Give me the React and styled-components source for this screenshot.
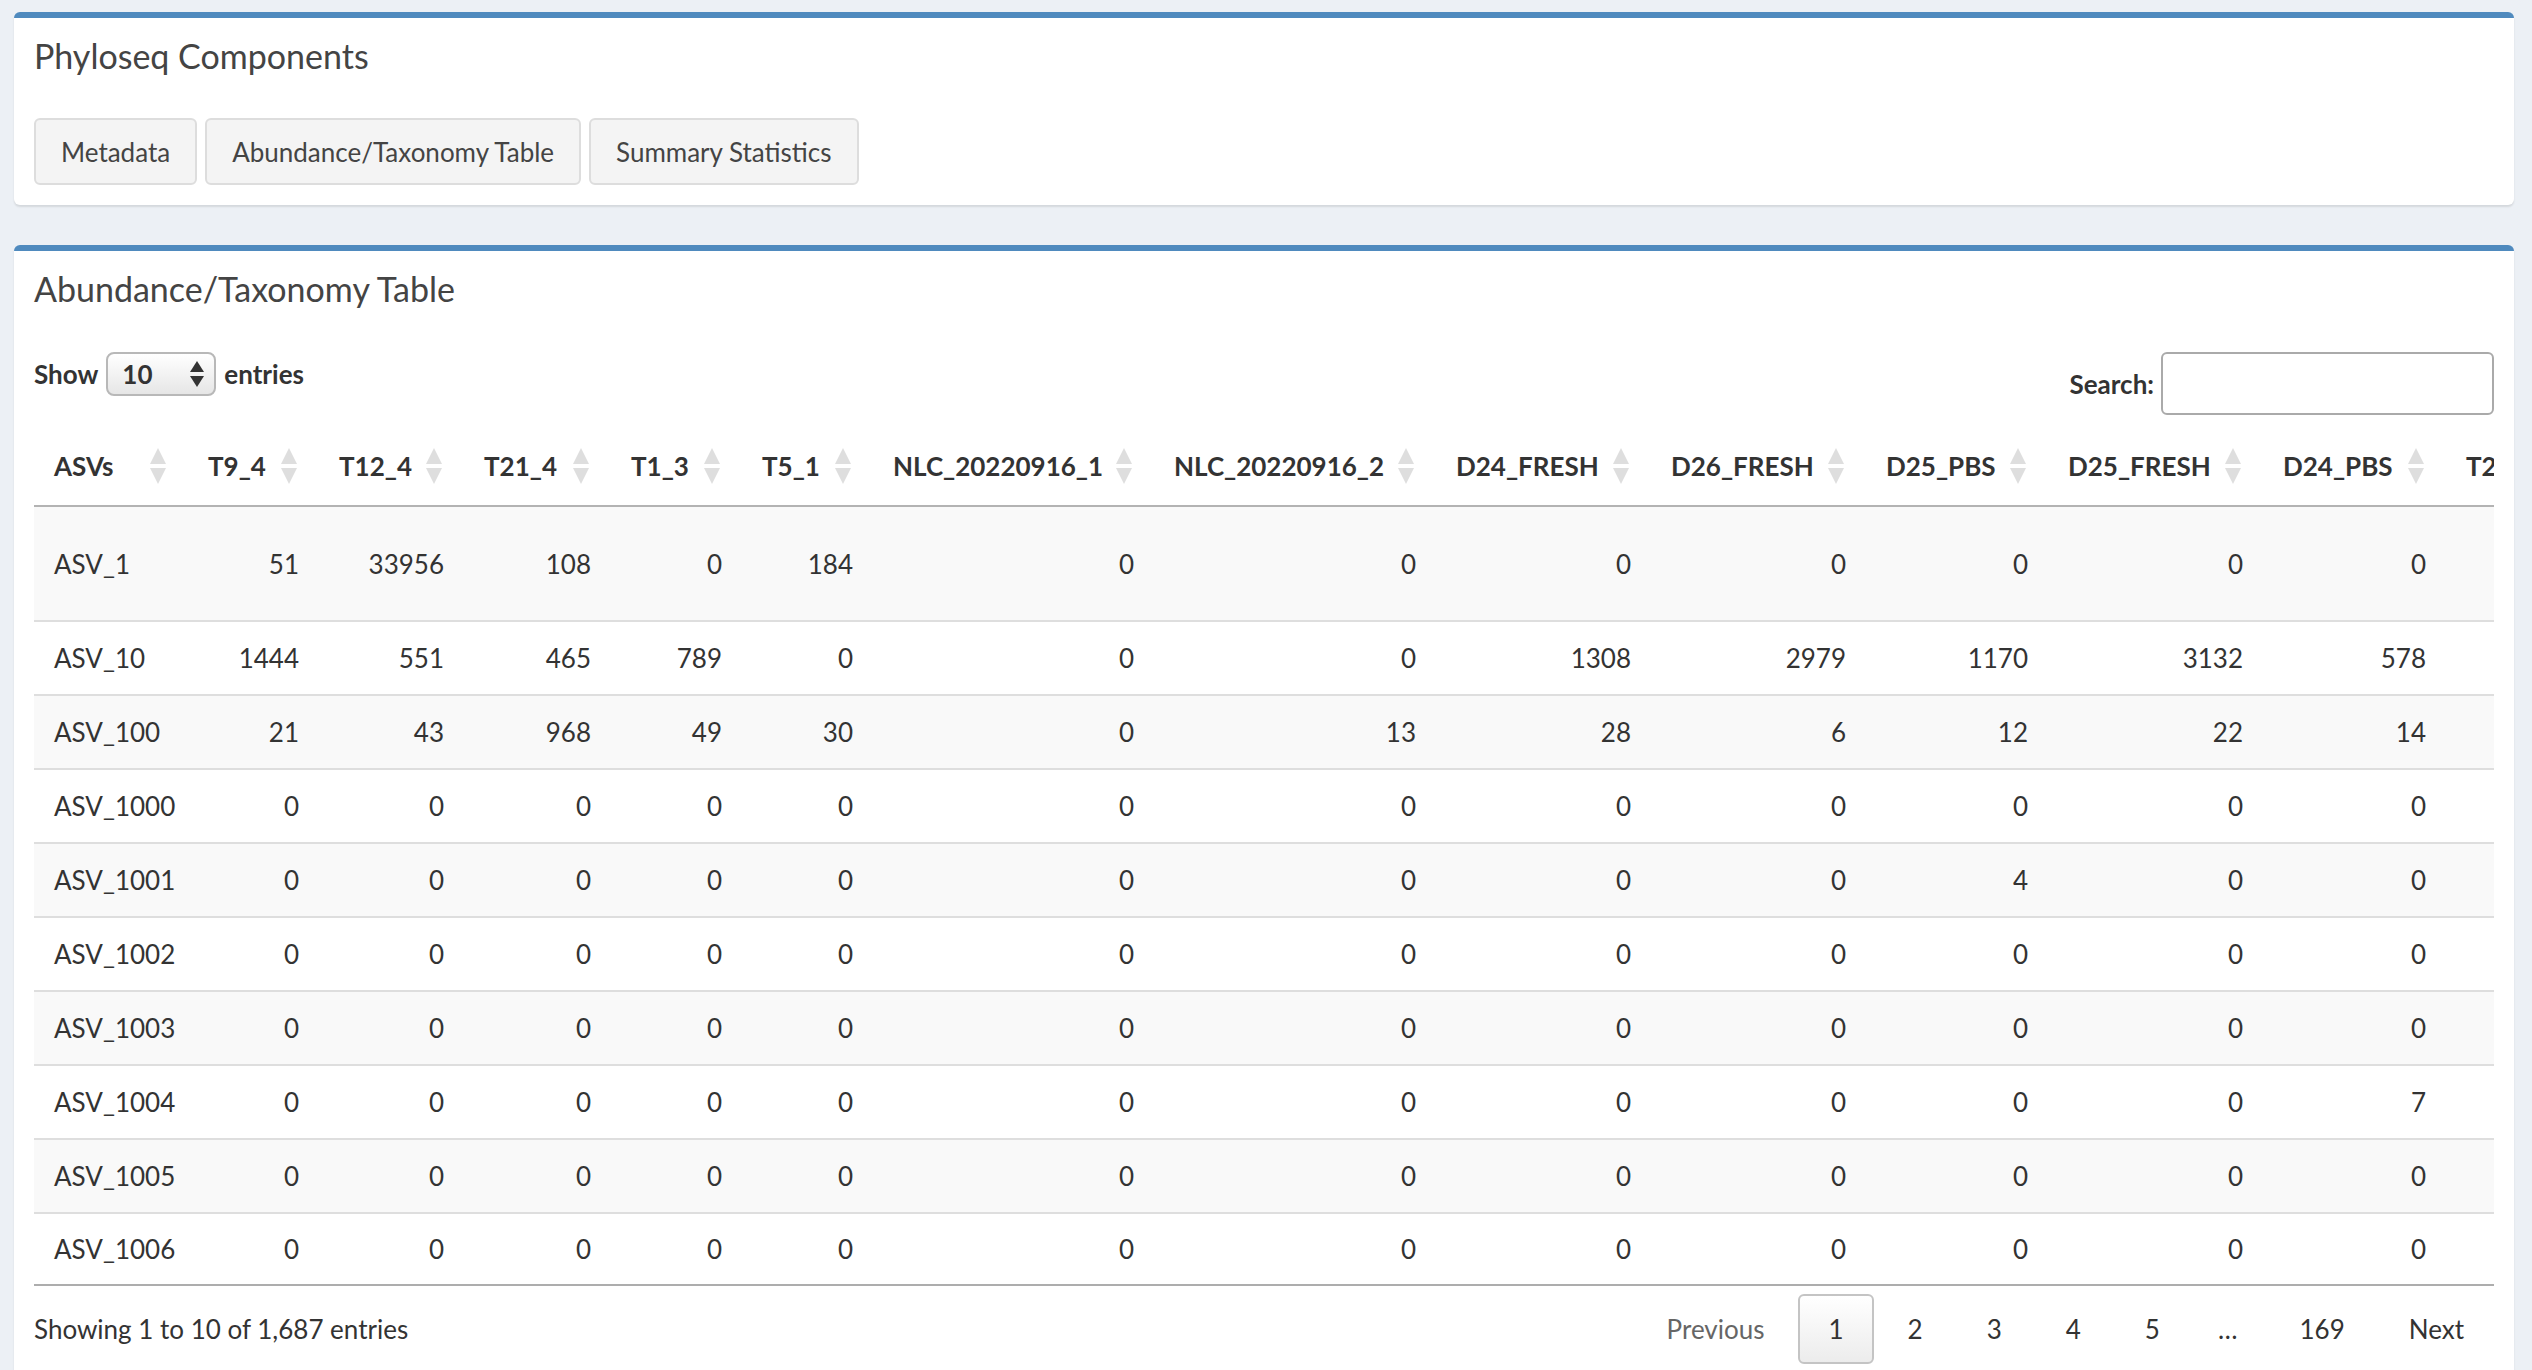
import React from "react";
import styled, { createGlobalStyle } from "styled-components";

const GlobalStyle = createGlobalStyle`
  html, body { margin: 0; padding: 0; }
  body {
    background: #ecf0f5;
    font-family: Lato, "Open Sans", "Liberation Sans", sans-serif;
    color: #333;
  }
  * { box-sizing: border-box; }
`;

const Page = styled.div`
  padding: 12px 18px 0 14px;
  display: flex;
  flex-direction: column;
  gap: 40px;
`;

const Box = styled.section`
  background: #fff;
  border-top: 6px solid #4f8abe;
  border-radius: 6px;
  box-shadow: 0 2px 2px rgba(0, 0, 0, 0.1);
`;

const BoxHeader = styled.div`
  padding: 20px;
`;

const BoxTitle = styled.h3`
  margin: 0;
  font-size: 34px;
  line-height: 36px;
  font-weight: 400;
  color: #444;
`;

const ButtonBar = styled.div`
  display: flex;
  gap: 8px;
  padding: 24px 20px 20px;
`;

const TabButton = styled.button`
  height: 67px;
  padding: 0 25px;
  background: #f4f4f4;
  border: 2px solid #ddd;
  border-radius: 6px;
  font-family: inherit;
  font-size: 26px;
  color: #444;
`;

const TableBody = styled.div`
  padding: 25px 20px 20px;
`;

const Controls = styled.div`
  display: flex;
  justify-content: space-between;
  align-items: flex-start;
  margin-bottom: 12px;
`;

const LengthLabel = styled.label`
  display: flex;
  align-items: center;
  gap: 8px;
  height: 44px;
  font-weight: 700;
  font-size: 26px;
  color: #333;
`;

const SelectWrap = styled.span`
  position: relative;
  display: inline-block;
  width: 110px;
  height: 44px;
`;

const Select = styled.select`
  appearance: none;
  -webkit-appearance: none;
  width: 100%;
  height: 100%;
  border: 2px solid #b8b8b8;
  border-radius: 8px;
  background: linear-gradient(#ffffff, #e6e6e6);
  font-family: inherit;
  font-weight: 700;
  font-size: 26px;
  color: #333;
  padding-left: 14px;
`;

const SelectArrows = styled.svg`
  position: absolute;
  right: 12px;
  top: 50%;
  transform: translateY(-50%);
  pointer-events: none;
`;

const SearchLabel = styled.label`
  display: flex;
  align-items: center;
  gap: 7px;
  font-weight: 700;
  font-size: 26px;
  color: #333;
`;

const SearchInput = styled.input`
  width: 333px;
  height: 63px;
  border: 2px solid #aaa;
  border-radius: 6px;
  font-family: inherit;
  font-size: 26px;
  padding: 0 10px;
`;

const TableScroll = styled.div`
  overflow: hidden;
  width: 100%;
`;

const Table = styled.table`
  table-layout: fixed;
  border-collapse: separate;
  border-spacing: 0;
`;

const Th = styled.th`
  position: relative;
  height: 80px;
  padding: 0 44px 0 20px;
  text-align: left;
  font-weight: 700;
  font-size: 26px;
  color: #333;
  border-bottom: 2px solid #b3b3b3;
  white-space: nowrap;
`;

const SortIcon = styled.svg`
  position: absolute;
  right: 22px;
  top: 50%;
  transform: translateY(-50%);
`;

const Tr = styled.tr`
  background: ${(p) => (p.$striped ? "#f9f9f9" : "#ffffff")};
`;

const Td = styled.td`
  height: ${(p) => (p.$tall ? "113px" : "74px")};
  padding: 0 20px;
  border-top: ${(p) => (p.$first ? "none" : "2px solid #dedede")};
  border-bottom: ${(p) => (p.$last ? "2px solid #adadad" : "none")};
  text-align: ${(p) => (p.$left ? "left" : "right")};
  vertical-align: middle;
  font-size: 26px;
  color: #333;
  white-space: nowrap;
`;

const Footer = styled.div`
  display: flex;
  justify-content: space-between;
  align-items: flex-start;
  padding-top: 8px;
`;

const Info = styled.div`
  line-height: 70px;
  font-size: 26px;
  color: #333;
`;

const Pager = styled.div`
  display: flex;
  align-items: center;
`;

const PageButton = styled.span`
  display: inline-flex;
  align-items: center;
  justify-content: center;
  height: 70px;
  padding: 0 28px;
  margin-left: 4px;
  border: 2px solid ${(p) => (p.$current ? "#c4c4c4" : "transparent")};
  border-radius: 6px;
  background: ${(p) => (p.$current ? "linear-gradient(#ffffff, #ececec)" : "transparent")};
  font-size: 26px;
  color: ${(p) => (p.$disabled ? "#666" : "#333")};
`;

const Ellipsis = styled.span`
  padding: 0 28px;
  line-height: 70px;
  font-size: 26px;
  color: #333;
`;

const columns = [
  { name: "ASVs", width: 154 },
  { name: "T9_4", width: 131 },
  { name: "T12_4", width: 145 },
  { name: "T21_4", width: 147 },
  { name: "T1_3", width: 131 },
  { name: "T5_1", width: 131 },
  { name: "NLC_20220916_1", width: 281 },
  { name: "NLC_20220916_2", width: 282 },
  { name: "D24_FRESH", width: 215 },
  { name: "D26_FRESH", width: 215 },
  { name: "D25_PBS", width: 182 },
  { name: "D25_FRESH", width: 215 },
  { name: "D24_PBS", width: 183 },
  { name: "T22_3", width: 200 },
];

const z = (n) => Array(n).fill(0);

const rows = [
  ["ASV_1", 51, 33956, 108, 0, 184, 0, 0, 0, 0, 0, 0, 0, 0],
  ["ASV_10", 1444, 551, 465, 789, 0, 0, 0, 1308, 2979, 1170, 3132, 578, 0],
  ["ASV_100", 21, 43, 968, 49, 30, 0, 13, 28, 6, 12, 22, 14, 0],
  ["ASV_1000", ...z(13)],
  ["ASV_1001", 0, 0, 0, 0, 0, 0, 0, 0, 0, 4, 0, 0, 0],
  ["ASV_1002", ...z(13)],
  ["ASV_1003", ...z(13)],
  ["ASV_1004", 0, 0, 0, 0, 0, 0, 0, 0, 0, 0, 0, 7, 0],
  ["ASV_1005", ...z(13)],
  ["ASV_1006", ...z(13)],
];

const tableWidth = columns.reduce((s, c) => s + c.width, 0);

function SortArrows() {
  return (
    <SortIcon width="16" height="36" viewBox="0 0 16 36">
      <polygon points="8,0 16,16 0,16" fill="#dedede" />
      <polygon points="0,20 16,20 8,36" fill="#dedede" />
    </SortIcon>
  );
}

export default function App() {
  return (
    <>
      <GlobalStyle />
      <Page>
        <Box>
          <BoxHeader>
            <BoxTitle>Phyloseq Components</BoxTitle>
          </BoxHeader>
          <ButtonBar>
            <TabButton>Metadata</TabButton>
            <TabButton>Abundance/Taxonomy Table</TabButton>
            <TabButton>Summary Statistics</TabButton>
          </ButtonBar>
        </Box>

        <Box>
          <BoxHeader>
            <BoxTitle>Abundance/Taxonomy Table</BoxTitle>
          </BoxHeader>
          <TableBody>
            <Controls>
              <LengthLabel>
                Show
                <SelectWrap>
                  <Select defaultValue="10">
                    <option value="10">10</option>
                    <option value="25">25</option>
                    <option value="50">50</option>
                    <option value="100">100</option>
                  </Select>
                  <SelectArrows width="14" height="26" viewBox="0 0 14 26">
                    <polygon points="7,0 14,11 0,11" fill="#333" />
                    <polygon points="0,15 14,15 7,26" fill="#333" />
                  </SelectArrows>
                </SelectWrap>
                entries
              </LengthLabel>
              <SearchLabel>
                Search:
                <SearchInput type="search" />
              </SearchLabel>
            </Controls>

            <TableScroll>
              <Table style={{ width: tableWidth }}>
                <colgroup>
                  {columns.map((c) => (
                    <col key={c.name} style={{ width: c.width }} />
                  ))}
                </colgroup>
                <thead>
                  <tr>
                    {columns.map((c) => (
                      <Th key={c.name}>
                        {c.name}
                        <SortArrows />
                      </Th>
                    ))}
                  </tr>
                </thead>
                <tbody>
                  {rows.map((r, i) => (
                    <Tr key={r[0]} $striped={i % 2 === 0}>
                      {r.map((v, j) => (
                        <Td
                          key={j}
                          $left={j === 0}
                          $first={i === 0}
                          $tall={i === 0}
                          $last={i === rows.length - 1}
                        >
                          {v}
                        </Td>
                      ))}
                    </Tr>
                  ))}
                </tbody>
              </Table>
            </TableScroll>

            <Footer>
              <Info>Showing 1 to 10 of 1,687 entries</Info>
              <Pager>
                <PageButton $disabled>Previous</PageButton>
                <PageButton $current>1</PageButton>
                <PageButton>2</PageButton>
                <PageButton>3</PageButton>
                <PageButton>4</PageButton>
                <PageButton>5</PageButton>
                <Ellipsis>…</Ellipsis>
                <PageButton>169</PageButton>
                <PageButton>Next</PageButton>
              </Pager>
            </Footer>
          </TableBody>
        </Box>
      </Page>
    </>
  );
}
